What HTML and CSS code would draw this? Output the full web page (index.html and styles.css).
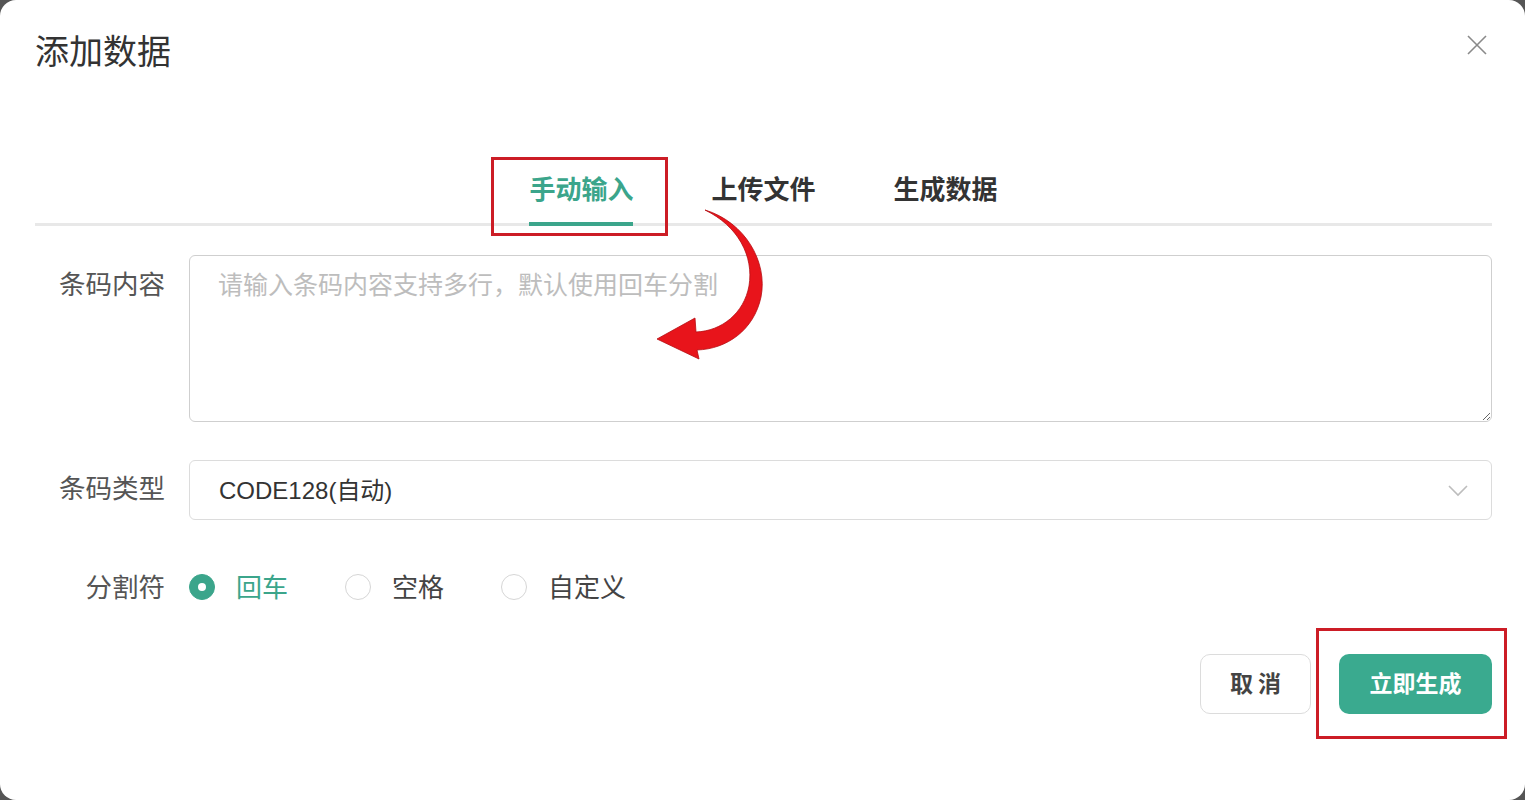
FILE: index.html
```html
<!DOCTYPE html>
<html lang="zh-CN">
<head>
<meta charset="utf-8">
<title>添加数据</title>
<link rel="stylesheet" href="styles.css">
</head>
<body>
<div class="dialog">
  <header class="dialog-header">
    <h1 class="dialog-title">添加数据</h1>
    <button class="close-btn" aria-label="关闭">
      <svg width="20" height="20" viewBox="0 0 20 20"><path d="M1 1L19 19M19 1L1 19" stroke="#8a8a8a" stroke-width="1.6" fill="none"/></svg>
    </button>
  </header>

  <nav class="tabs">
    <div class="tab active">手动输入</div>
    <div class="tab">上传文件</div>
    <div class="tab">生成数据</div>
  </nav>

  <form class="form">
    <div class="form-row">
      <label class="form-label">条码内容</label>
      <textarea class="textarea" placeholder="请输入条码内容支持多行，默认使用回车分割"></textarea>
    </div>
    <div class="form-row row-select">
      <label class="form-label">条码类型</label>
      <div class="select">
        <span class="select-value">CODE128(自动)</span>
        <svg class="chevron" width="20" height="12" viewBox="0 0 20 12"><path d="M1 1L10 10L19 1" stroke="#bdbdbd" stroke-width="1.6" fill="none"/></svg>
      </div>
    </div>
    <div class="form-row row-radio">
      <label class="form-label">分割符</label>
      <div class="radio-group">
        <span class="radio checked"><span class="radio-dot"></span><span class="radio-text">回车</span></span>
        <span class="radio"><span class="radio-dot"></span><span class="radio-text">空格</span></span>
        <span class="radio"><span class="radio-dot"></span><span class="radio-text">自定义</span></span>
      </div>
    </div>
    <div class="actions">
      <button type="button" class="btn btn-default">取 消</button>
      <button type="button" class="btn btn-primary">立即生成</button>
    </div>
  </form>

  <div class="mark mark-tab"></div>
  <div class="mark mark-btn"></div>
  <svg class="arrow" width="130" height="160" viewBox="650 205 130 160">
    <path d="M705 210 C745 222 768 262 761 297 C754 330 727 349 697 350 L699 359 L657 339 L695 318 L696 332 C722 331 744 313 749 286 C754 256 738 226 705 210 Z" fill="#e8141b" stroke="#b50d12" stroke-width="0.8"/>
  </svg>
</div>
</body>
</html>
```

FILE: styles.css
```css
* { box-sizing: border-box; }
html, body { margin: 0; padding: 0; }
body {
  background: #555;
  width: 1525px;
  height: 800px;
  overflow: hidden;
  font-family: "Liberation Sans", "Noto Sans CJK SC", sans-serif;
}
.dialog {
  position: relative;
  width: 1525px;
  height: 800px;
  background: #fff;
  border-radius: 16px;
  padding: 0 33px 0 35px;
}
.dialog-header {
  display: flex;
  justify-content: space-between;
  align-items: flex-start;
  padding-top: 30px;
}
.dialog-title {
  margin: 0;
  font-size: 34px;
  line-height: 40px;
  font-weight: 400;
  color: #333;
  font-family: "Noto Sans CJK SC", sans-serif;
}
.close-btn {
  border: 0;
  background: none;
  padding: 0;
  margin: 5px 5px 0 0;
  width: 20px;
  height: 20px;
  display: flex;
}
.tabs {
  margin-top: 100px;
  display: flex;
  justify-content: center;
  gap: 78px;
  border-bottom: 3px solid #e8e8e8;
}
.tab {
  font-family: "Noto Sans CJK SC", sans-serif;
  font-size: 26px;
  line-height: 36px;
  font-weight: 600;
  color: #333;
  padding-bottom: 16px;
  border-bottom: 4px solid transparent;
  margin-bottom: -3px;
}
.tab.active {
  color: #3ba58b;
  border-bottom-color: #3ba58b;
}
.form {
  padding-top: 29px;
}
.form-row {
  display: flex;
  gap: 24px;
}
.form-label {
  flex: 0 0 130px;
  text-align: right;
  font-family: "Noto Sans CJK SC", sans-serif;
  font-size: 26.5px;
  line-height: 34px;
  padding-top: 11px;
  color: #555;
  white-space: nowrap;
}
.textarea {
  flex: 1;
  height: 167px;
  border: 1.5px solid #cfcfcf;
  border-radius: 6px;
  padding: 10px 28px;
  font-family: "Noto Sans CJK SC", sans-serif;
  font-size: 25px;
  line-height: 34px;
  color: #333;
  resize: vertical;
  outline: none;
  display: block;
}
.textarea::placeholder { color: #bdbdbd; }
.row-select { margin-top: 38px; }
.row-select .form-label { padding-top: 10px; }
.select {
  flex: 1;
  height: 60px;
  border: 1.5px solid #dcdcdc;
  border-radius: 6px;
  display: flex;
  align-items: center;
  justify-content: space-between;
  padding: 0 23px 4px 29px;
}
.select-value {
  font-size: 24px;
  color: #333;
  font-family: "Liberation Sans", "Noto Sans CJK SC", sans-serif;
}
.chevron { margin-top: 6px; }
.row-radio {
  margin-top: 46px;
  align-items: center;
}
.row-radio .form-label { padding-top: 0; padding-bottom: 2px; }
.radio-group {
  display: flex;
  align-items: center;
  gap: 57px;
}
.radio {
  display: flex;
  align-items: center;
  gap: 21px;
}
.radio-dot {
  width: 26px;
  height: 26px;
  border-radius: 50%;
  border: 1.5px solid #d6d6d6;
  background: #fff;
  position: relative;
}
.radio.checked .radio-dot {
  background: #3ba58b;
  border-color: #3ba58b;
}
.radio.checked .radio-dot::after {
  content: "";
  position: absolute;
  left: 50%;
  top: 50%;
  width: 8px;
  height: 8px;
  margin: -4px 0 0 -4px;
  border-radius: 50%;
  background: #fff;
}
.radio-text {
  font-family: "Noto Sans CJK SC", sans-serif;
  font-size: 26px;
  line-height: 40px;
  color: #444;
  padding-bottom: 2px;
}
.radio.checked .radio-text { color: #3ba58b; }
.actions {
  display: flex;
  justify-content: flex-end;
  gap: 28px;
  margin-top: 46px;
}
.btn {
  height: 60px;
  border-radius: 10px;
  font-family: "Noto Sans CJK SC", sans-serif;
  font-size: 23px;
  font-weight: 700;
  cursor: pointer;
  padding: 0 0 4px;
}
.btn-default {
  width: 111px;
  background: #fff;
  border: 1.5px solid #dcdcdc;
  color: #444;
}
.btn-primary {
  width: 153px;
  background: #3aaa8f;
  border: 0;
  color: #fff;
}
.mark {
  position: absolute;
  border: 3px solid #cc1d26;
  pointer-events: none;
}
.mark-tab { left: 491px; top: 157px; width: 177px; height: 79px; }
.mark-btn { left: 1316px; top: 628px; width: 191px; height: 111px; }
.arrow {
  position: absolute;
  left: 650px;
  top: 205px;
}
```
